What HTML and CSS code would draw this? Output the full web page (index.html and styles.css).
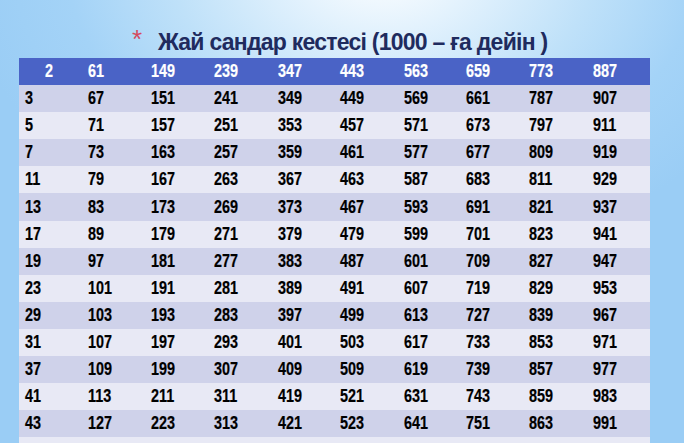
FILE: index.html
```html
<!DOCTYPE html>
<html lang="kk">
<head>
<meta charset="utf-8">
<link rel="stylesheet" href="styles.css">
</head>
<body>
<div class="slide">
  <h1 class="title"><span class="bullet">*</span><span class="title-text">Жай сандар кестесі (1000 – ға дейін )</span></h1>
  <div class="table">
    <div class="row head"><span class="first">2</span><span>61</span><span>149</span><span>239</span><span>347</span><span>443</span><span>563</span><span>659</span><span>773</span><span>887</span></div>
    <div class="row odd"><span>3</span><span>67</span><span>151</span><span>241</span><span>349</span><span>449</span><span>569</span><span>661</span><span>787</span><span>907</span></div>
    <div class="row even"><span>5</span><span>71</span><span>157</span><span>251</span><span>353</span><span>457</span><span>571</span><span>673</span><span>797</span><span>911</span></div>
    <div class="row odd"><span>7</span><span>73</span><span>163</span><span>257</span><span>359</span><span>461</span><span>577</span><span>677</span><span>809</span><span>919</span></div>
    <div class="row even"><span>11</span><span>79</span><span>167</span><span>263</span><span>367</span><span>463</span><span>587</span><span>683</span><span>811</span><span>929</span></div>
    <div class="row odd"><span>13</span><span>83</span><span>173</span><span>269</span><span>373</span><span>467</span><span>593</span><span>691</span><span>821</span><span>937</span></div>
    <div class="row even"><span>17</span><span>89</span><span>179</span><span>271</span><span>379</span><span>479</span><span>599</span><span>701</span><span>823</span><span>941</span></div>
    <div class="row odd"><span>19</span><span>97</span><span>181</span><span>277</span><span>383</span><span>487</span><span>601</span><span>709</span><span>827</span><span>947</span></div>
    <div class="row even"><span>23</span><span>101</span><span>191</span><span>281</span><span>389</span><span>491</span><span>607</span><span>719</span><span>829</span><span>953</span></div>
    <div class="row odd"><span>29</span><span>103</span><span>193</span><span>283</span><span>397</span><span>499</span><span>613</span><span>727</span><span>839</span><span>967</span></div>
    <div class="row even"><span>31</span><span>107</span><span>197</span><span>293</span><span>401</span><span>503</span><span>617</span><span>733</span><span>853</span><span>971</span></div>
    <div class="row odd"><span>37</span><span>109</span><span>199</span><span>307</span><span>409</span><span>509</span><span>619</span><span>739</span><span>857</span><span>977</span></div>
    <div class="row even"><span>41</span><span>113</span><span>211</span><span>311</span><span>419</span><span>521</span><span>631</span><span>743</span><span>859</span><span>983</span></div>
    <div class="row odd"><span>43</span><span>127</span><span>223</span><span>313</span><span>421</span><span>523</span><span>641</span><span>751</span><span>863</span><span>991</span></div>
    <div class="row even"><span></span><span></span><span></span><span></span><span></span><span></span><span></span><span></span><span></span><span></span></div>
  </div>
</div>
</body>
</html>
```

FILE: styles.css
```css
html, body {
  margin: 0;
  padding: 0;
}
body {
  width: 684px;
  height: 443px;
  overflow: hidden;
}
.slide {
  width: 684px;
  height: 443px;
  overflow: hidden;
  background: radial-gradient(ellipse 420px 300px at 56% -8%, #ffffff 0%, #e3f2fd 22%, #bfe1f9 50%, #a4d3f7 75%, #9acdf5 100%);
  font-family: "Liberation Sans", Arial, sans-serif;
}
.title {
  margin: 0;
  height: 58px;
  box-sizing: border-box;
  padding: 28px 0 0 132px;
  display: flex;
  align-items: flex-start;
  font-weight: bold;
  line-height: 28px;
}
.bullet {
  color: #d44a5e;
  font-size: 26px;
  font-weight: normal;
  width: 26px;
  line-height: 22px;
}
.title-text {
  color: #1f2b5e;
  font-size: 23px;
  letter-spacing: -0.75px;
}
.table {
  margin-left: 19px;
  width: 631px;
}
.row {
  display: grid;
  grid-template-columns: 63px 63px 63px 64px 62px 64px 62px 63px 64px 63px;
  height: 27.1px;
  align-items: center;
  font-weight: bold;
  font-size: 18px;
  color: #000;
}
.row span {
  display: block;
  padding-left: 6px;
  transform: scaleX(0.8);
  transform-origin: 6px 50%;
  white-space: nowrap;
  -webkit-text-stroke: 0.2px currentColor;
}
.head {
  background: #4a63c6;
  color: #ffffff;
}
.head .first {
  padding-left: 26px;
  transform-origin: 26px 50%;
}
.odd {
  background: #cfd2ea;
}
.even {
  background: #e8e9f5;
}
```
